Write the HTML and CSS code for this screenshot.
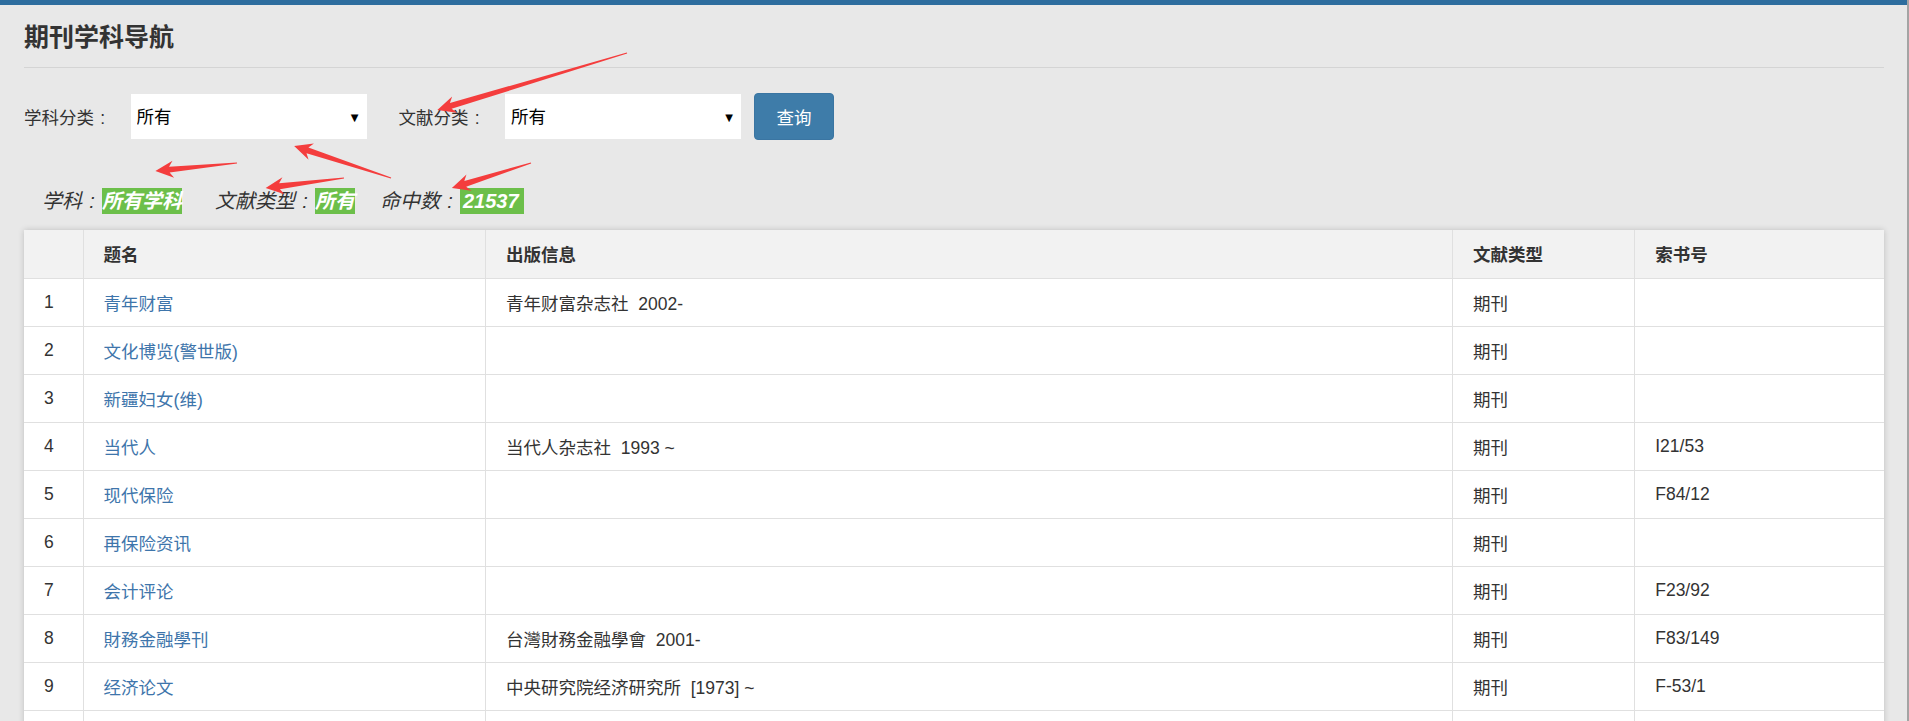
FILE: index.html
```html
<!DOCTYPE html>
<html lang="zh-CN">
<head>
    <meta charset="UTF-8">
    <meta name="viewport" content="width=device-width, initial-scale=1.0">
    <title>期刊学科导航</title>
    <link rel="stylesheet" href="styles.css">
</head>
<body>
    <div class="topbar"></div>
    <div class="page">
        <h3 class="title">期刊学科导航</h3>
        <hr class="rule">

        <form class="search">
            <label class="label">学科分类<span class="colon">:</span></label>
            <div class="select-box first">
                <select class="select">
                    <option>所有</option>
                </select>
            </div>
            <label class="label">文献分类<span class="colon">:</span></label>
            <div class="select-box">
                <select class="select">
                    <option>所有</option>
                </select>
            </div>
            <button type="button" class="btn">查询</button>
        </form>

        <p class="summary">
            学科<span class="colon">:</span><span class="tag gap1">所有学科</span>文献类型<span class="colon">:</span><span class="tag gap2">所有</span>命中数<span class="colon">:</span><span class="tag num">21537</span>
        </p>

        <div class="card">
            <table class="list">
                <colgroup>
                    <col class="c-no">
                    <col class="c-name">
                    <col class="c-pub">
                    <col class="c-type">
                    <col class="c-call">
                </colgroup>
                <thead>
                    <tr>
                        <th></th>
                        <th>题名</th>
                        <th>出版信息</th>
                        <th>文献类型</th>
                        <th>索书号</th>
                    </tr>
                </thead>
                <tbody>
                    <tr><td>1</td><td><a href="#">青年财富</a></td><td>青年财富杂志社&nbsp; 2002-</td><td>期刊</td><td></td></tr>
                    <tr><td>2</td><td><a href="#">文化博览(警世版)</a></td><td></td><td>期刊</td><td></td></tr>
                    <tr><td>3</td><td><a href="#">新疆妇女(维)</a></td><td></td><td>期刊</td><td></td></tr>
                    <tr><td>4</td><td><a href="#">当代人</a></td><td>当代人杂志社&nbsp; 1993 ~</td><td>期刊</td><td>I21/53</td></tr>
                    <tr><td>5</td><td><a href="#">现代保险</a></td><td></td><td>期刊</td><td>F84/12</td></tr>
                    <tr><td>6</td><td><a href="#">再保险资讯</a></td><td></td><td>期刊</td><td></td></tr>
                    <tr><td>7</td><td><a href="#">会计评论</a></td><td></td><td>期刊</td><td>F23/92</td></tr>
                    <tr><td>8</td><td><a href="#">財務金融學刊</a></td><td>台灣財務金融學會&nbsp; 2001-</td><td>期刊</td><td>F83/149</td></tr>
                    <tr><td>9</td><td><a href="#">经济论文</a></td><td>中央研究院经济研究所&nbsp; [1973] ~</td><td>期刊</td><td>F-53/1</td></tr>
                    <tr><td></td><td></td><td></td><td></td><td></td></tr>
                </tbody>
            </table>
        </div>
    </div>

    <!-- annotation arrows drawn over the screenshot -->
    <svg class="marks" width="1909" height="721" viewBox="0 0 1909 721">
        <g fill="#f43d3d">
            <polygon transform="translate(627 53) rotate(163.3)" points="0,-0.6 184,-3 180,-8.5 198,0 180,8.5 184,3 0,0.6"/>
            <polygon transform="translate(391 178) rotate(198.3)" points="0,-0.6 88,-3 84,-8.5 102,0 84,8.5 88,3 0,0.6"/>
            <polygon transform="translate(237 163) rotate(174.4)" points="0,-0.6 68,-3 64,-8.5 82,0 64,8.5 68,3 0,0.6"/>
            <polygon transform="translate(344 178) rotate(172.7)" points="0,-0.6 65,-3 61,-8.5 79,0 61,8.5 65,3 0,0.6"/>
            <polygon transform="translate(531 163) rotate(162.4)" points="0,-0.6 69,-3 65,-8.5 83,0 65,8.5 69,3 0,0.6"/>
        </g>
    </svg>
</body>
</html>
```

FILE: styles.css
```css
html, body {
    margin: 0;
}
body {
    position: relative;
    min-height: 100vh;
    box-sizing: border-box;
    border-right: 2px solid #a4a4a4;
    background: #e8e8e8;
    color: #333;
    font-family: "Liberation Sans", "Noto Sans CJK SC", sans-serif;
    font-size: 17.5px;
    overflow: hidden;
}
.topbar {
    height: 5px;
    background: #2d6d9e;
}
.page {
    padding: 0 23px 0 24px;
}
.title {
    margin: 17px 0 0;
    font-size: 25px;
    line-height: 30px;
    font-weight: bold;
    color: #333;
}
.rule {
    margin: 15px 0 0;
    border: 0;
    border-top: 1px solid #d4d4d4;
}
.search {
    display: flex;
    align-items: center;
    height: 47px;
    margin-top: 25px;
}
.label {
    margin-right: 19px;
    color: #333;
}
.colon {
    display: inline-block;
    width: 1em;
    text-align: center;
}
.select-box {
    position: relative;
    margin-right: 13px;
}
.select-box.first {
    margin-right: 32px;
}
.select-box::after {
    content: "\25BC";
    position: absolute;
    right: 8px;
    top: 50%;
    transform: translateY(-50%);
    font-family: "DejaVu Sans", sans-serif;
    font-size: 10px;
    color: #000;
    pointer-events: none;
}
.select {
    display: block;
    width: 236px;
    height: 45px;
    padding: 0 0 0 6px;
    border: 0;
    border-radius: 0;
    background: #fff;
    color: #000;
    font-family: inherit;
    font-size: 17.5px;
    appearance: none;
    -webkit-appearance: none;
}
.btn {
    width: 80px;
    height: 47px;
    border: 1px solid #3a75a2;
    border-radius: 4px;
    background: #3e7ca9;
    color: #fff;
    font-family: inherit;
    font-size: 17.5px;
    cursor: pointer;
}
.summary {
    margin: 48px 0 0 18px;
    font-size: 20px;
    line-height: 26px;
    font-style: italic;
    color: #333;
}
.tag {
    display: inline-block;
    background: #6cbf4a;
    color: #fff;
    font-weight: bold;
}
.tag.gap1 {
    margin-right: 33px;
}
.tag.gap2 {
    margin-right: 25px;
}
.tag.num {
    padding: 0 5px 0 3px;
}
.card {
    margin-top: 16px;
    background: #fff;
    box-shadow: 0 0 6px rgba(0, 0, 0, 0.18);
}
.list {
    width: 100%;
    border-collapse: collapse;
    table-layout: fixed;
}
.c-no { width: 59px; }
.c-name { width: 402px; }
.c-pub { width: 966px; }
.c-type { width: 182px; }
.c-call { width: 249px; }
.list th,
.list td {
    height: 48px;
    padding: 0 0 0 20px;
    box-sizing: border-box;
    border-bottom: 1px solid #e0e0e0;
    border-left: 1px solid #e0e0e0;
    text-align: left;
    vertical-align: middle;
    white-space: nowrap;
}
.list th:first-child,
.list td:first-child {
    border-left: 0;
}
.list th {
    background: #f2f2f2;
    font-weight: bold;
}
.list a {
    color: #3e75ab;
    text-decoration: none;
}
.list a:hover {
    text-decoration: underline;
}
.marks {
    position: absolute;
    top: 0;
    left: 0;
    pointer-events: none;
}
```
